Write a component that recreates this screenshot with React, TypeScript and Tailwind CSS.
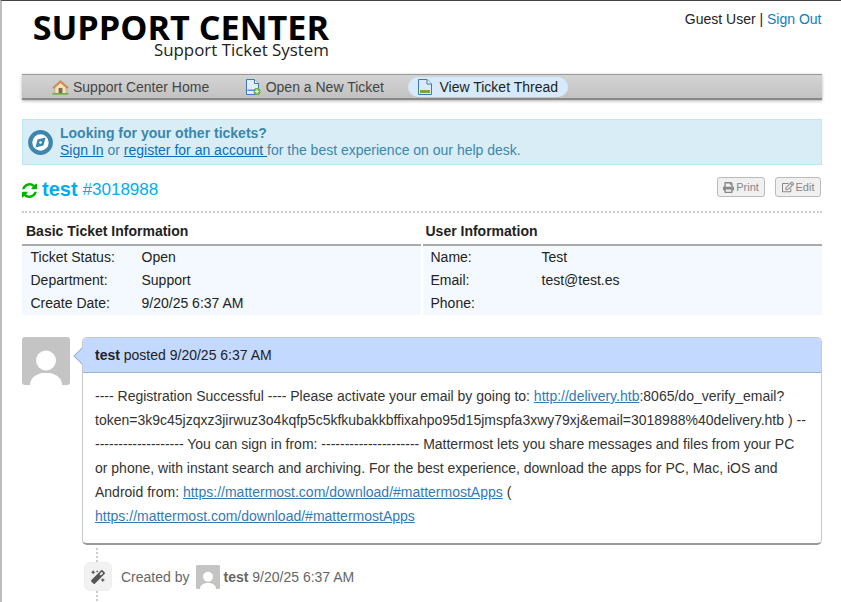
import React from "react";
import { FaPrint, FaRegEdit, FaMagic } from "react-icons/fa";

const Person = ({ size }: { size: number }) => (
  <svg width={size} height={size} viewBox="0 0 48 48" className="block">
    <rect width="48" height="48" rx="3" fill="#c4c4c4" />
    <circle cx="24" cy="23.500" r="10" fill="#fff" />
    <path d="M8 48c0-7 5-10 12-12h8c7 2 12 5 12 12z" fill="#fff" />
  </svg>
);

const Refresh = () => (
  <svg width="15" height="15" viewBox="128 128 1536 1536" className="block mt-[2px]" fill="#00b300">
    <path d="M1639 1056q0 5-1 7-64 268-268 434.500t-478 166.500q-146 0-282.500-55t-243.500-157l-129 129q-19 19-45 19t-45-19-19-45v-448q0-26 19-45t45-19h448q26 0 45 19t19 45-19 45l-137 137q71 66 161 102t187 36q134 0 250-65t186-179q11-17 53-117 8-23 30-23h192q13 0 22.500 9.500t9.500 22.500zm25-800v448q0 26-19 45t-45 19h-448q-26 0-45-19t-19-45 19-45l138-138q-148-137-349-137-134 0-250 65t-186 179q-11 17-53 117-8 23-30 23h-199q-13 0-22.500-9.500t-9.500-22.500v-7q65-268 270-434.500t480-166.500q146 0 284 55.500t245 156.500l130-129q19-19 45-19t45 19 19 45z" />
  </svg>
);

const HomeIcon = () => (
  <svg width="17" height="16" viewBox="0 0 18 16" className="block">
    <path d="M3 8v7h12V8L9 3z" fill="#f5e3b8" stroke="#b98b4a" strokeWidth="0.6" />
    <path d="M0.8 8.5 9 1l8.2 7.5-1.2.8L9 3.4 2 9.3z" fill="#e0954e" stroke="#a8622a" strokeWidth="0.5" />
    <rect x="7" y="9" width="4" height="6" fill="#7d6a52" />
    <rect x="0.5" y="14.500" width="17" height="1.500" fill="#5fae3c" />
  </svg>
);

const DocPlus = () => (
  <svg width="16" height="16" viewBox="0 0 16 16" className="block">
    <path d="M1.500.5h8l4 4v11h-12z" fill="#e3eefa" stroke="#3b78b8" />
    <path d="M9.500.5v4h4" fill="#fff" stroke="#3b78b8" />
    <rect x="2.500" y="10.500" width="8" height="1.500" fill="#4f94d8" />
    <circle cx="12" cy="12.500" r="3.500" fill="#6db33f" />
    <path d="M12 10.500v4M10 12.500h4" stroke="#fff" strokeWidth="1.200" />
  </svg>
);

const DocGreen = () => (
  <svg width="14" height="16" viewBox="0 0 14 16" className="block">
    <path d="M.5.5h8.500l4.500 4.500v10.500h-13z" fill="#dbe9f9" stroke="#3b78b8" />
    <path d="M9 .5V5h4.500" fill="#f4f8fd" stroke="#3b78b8" />
    <rect x="2" y="11" width="10" height="3" fill="#76ab3a" />
  </svg>
);

const Compass = () => (
  <svg width="25" height="25" viewBox="0 0 25 25" className="block">
    <circle cx="12.500" cy="12.500" r="10.300" fill="#fff" stroke="#3d86ad" strokeWidth="4.200" />
    <path d="M17.500 7.500 15.500 15.500 7.500 17.500 9.500 9.500z" fill="#3d86ad" />
    <circle cx="12.500" cy="12.500" r="1.300" fill="#fff" />
  </svg>
);

const NavItem = ({ icon, label, active, gap }: { icon: React.ReactNode; label: string; active?: boolean; gap: string }) => (
  <div className={`flex items-center h-[20px] rounded-[10px] ${gap} ${active ? "bg-[#d7eafb] text-[#222] px-[10px]" : "text-[#444]"}`}>
    {icon}
    <span className="pt-[1px]">{label}</span>
  </div>
);

const Row = ({ label, value, w, pl }: { label: string; value?: string; w: string; pl: string }) => (
  <div className={`flex h-[23px] items-center ${pl}`}>
    <span className={w}>{label}</span>
    <span>{value}</span>
  </div>
);

export default function App() {
  return (
    <div className="w-[841px] h-[602px] overflow-hidden bg-white border-t-[1px] border-t-[#444] border-l-[2px] border-l-[#bdbdbd] text-[14px] text-[#222] font-['Liberation_Sans',Arial,sans-serif]">
      <div className="w-[800px] ml-[20px]">
        <div className="h-[73px] flex justify-between">
          <div className="flex flex-col items-end w-[307px] font-['Open_Sans',sans-serif]">
            <div className="text-[34.2px] leading-[27px] mt-[12px] font-bold text-black whitespace-nowrap">SUPPORT CENTER</div>
            <div className="text-[16.900px] leading-[20px] text-[#222] whitespace-nowrap">Support Ticket System</div>
          </div>
          <div className="pt-[10px] pr-[0.5px] leading-[16px] whitespace-nowrap">
            Guest User | <span className="text-[#0a7fc4]">Sign Out</span>
          </div>
        </div>

        <div className="h-[26px] flex items-center pl-[30px] border-t-[1px] border-t-[#999] border-b-[2px] border-b-[#888] bg-gradient-to-b from-[#d4d4d4] to-[#c2c2c2] shadow-[0_1px_3px_rgba(0,0,0,0.3)]">
          <NavItem gap="gap-[4px]" icon={<HomeIcon />} label="Support Center Home" />
          <div className="ml-[35.5px]">
            <NavItem gap="gap-[5px]" icon={<DocPlus />} label="Open a New Ticket" />
          </div>
          <div className="ml-[24.5px]">
            <NavItem gap="gap-[7px]" active icon={<DocGreen />} label="View Ticket Thread" />
          </div>
        </div>

        <div className="mt-[19px] h-[46px] flex items-center gap-[7px] pl-[5px] bg-[#d9edf7] border border-[#bce8f1] text-[#3a87ad] leading-[17px]">
          <Compass />
          <div>
            <div className="font-bold">Looking for your other tickets?</div>
            <div className="whitespace-nowrap">
              <span className="underline text-[#0a6ebd]">Sign In</span> or{" "}
              <span className="underline text-[#0a6ebd]">register for an account </span>for the best experience on our help desk.
            </div>
          </div>
        </div>

        <div className="mt-[11px] h-[37px] flex justify-between border-b-[2px] border-dotted border-b-[#ccc] pb-[8px] items-start">
          <div className="flex items-center gap-[5px] h-[26px] text-[#00aeef]">
            <Refresh />
            <span className="font-bold text-[20px]">test</span>
            <span className="text-[17px] pt-[2px]">#3018988</span>
          </div>
          <div className="flex gap-[10px] text-[11px] text-[#888] mt-[1px] pr-[1px]">
            <div className="h-[20px] w-[48px] flex items-center justify-center gap-[2px] rounded-[3px] border border-[#bbb] bg-[#f0f0f0]">
              <FaPrint className="w-[11px] h-[11px]" />Print
            </div>
            <div className="h-[20px] w-[46px] flex items-center justify-center gap-[2px] rounded-[3px] border border-[#bbb] bg-[#f0f0f0]">
              <FaRegEdit className="w-[12px] h-[12px]" />Edit
            </div>
          </div>
        </div>

        <div className="mt-[1px] flex gap-[2px]">
          <div className="w-[399px]">
            <div className="h-[32px] flex items-center pl-[4px] font-bold border-b-[2px] border-b-[#aaa] pt-[5px]">Basic Ticket Information</div>
            <div className="bg-[#f4f9ff] h-[69px]">
              <Row pl="pl-[8.5px]" w="w-[111px]" label="Ticket Status:" value="Open" />
              <Row pl="pl-[8.5px]" w="w-[111px]" label="Department:" value="Support" />
              <Row pl="pl-[8.5px]" w="w-[111px]" label="Create Date:" value="9/20/25 6:37 AM" />
            </div>
          </div>
          <div className="w-[399px]">
            <div className="h-[32px] flex items-center pl-[2.5px] font-bold border-b-[2px] border-b-[#aaa] pt-[5px]">User Information</div>
            <div className="bg-[#f4f9ff] h-[69px]">
              <Row pl="pl-[7.5px]" w="w-[111px]" label="Name:" value="Test" />
              <Row pl="pl-[7.5px]" w="w-[111px]" label="Email:" value="test@test.es" />
              <Row pl="pl-[7.5px]" w="w-[111px]" label="Phone:" />
            </div>
          </div>
        </div>

        <div className="mt-[22px] flex gap-[12px] items-start">
          <div className="shrink-0"><Person size={48} /></div>
          <div className="relative w-[740px] rounded-[5px] border border-[#c8c8c8] border-b-[2px] border-b-[#999]">
            <div className="absolute -left-[7px] top-[12px] w-[12px] h-[12px] rotate-45 bg-[#c3d9ff] border-l border-b border-[#9cb3d8]" />
            <div className="relative h-[35px] flex items-center pl-[12px] bg-[#c3d9ff] rounded-t-[4px] border-b border-[#9cb3d8]">
              <span><b>test</b> posted 9/20/25 6:37 AM</span>
            </div>
            <div className="px-[12px] pt-[11px] pb-[15px] leading-[24px] text-[#333] break-words">
              ---- Registration Successful ---- Please activate your email by going to: <span className="underline text-[#337ab7]">http://delivery.htb</span>:8065/do_verify_email?<br />
              token=3k9c45jzqxz3jirwuz3o4kqfp5c5kfkubakkbffixahpo95d15jmspfa3xwy79xj&amp;email=3018988%40delivery.htb ) --<br />
              ------------------- You can sign in from: --------------------- Mattermost lets you share messages and files from your PC<br />
              or phone, with instant search and archiving. For the best experience, download the apps for PC, Mac, iOS and<br />
              Android from: <span className="underline text-[#337ab7]">https://mattermost.com/download/#mattermostApps</span> (<br />
              <span className="underline text-[#337ab7]">https://mattermost.com/download/#mattermostApps</span>
            </div>
          </div>
        </div>

        <div className="ml-[62px]">
          <div className="ml-[12px] h-[14px] mt-[3px] border-l-[2px] border-dotted border-l-[#ccc]" />
          <div className="flex items-center h-[29px] text-[#666]">
            <div className="w-[28px] h-[29px] rounded-[6px] bg-[#f2f2f2] border border-[#eee] flex items-center justify-center">
              <FaMagic className="w-[14px] h-[14px] text-[#555]" />
            </div>
            <span className="ml-[9px] pt-[1px]">Created by</span>
            <span className="ml-[7px] pt-[1px]"><Person size={24} /></span>
            <span className="ml-[3px] pt-[1px]"><b>test</b> 9/20/25 6:37 AM</span>
          </div>
          <div className="ml-[12px] h-[14px] border-l-[2px] border-dotted border-l-[#ccc]" />
        </div>
      </div>
    </div>
  );
}
